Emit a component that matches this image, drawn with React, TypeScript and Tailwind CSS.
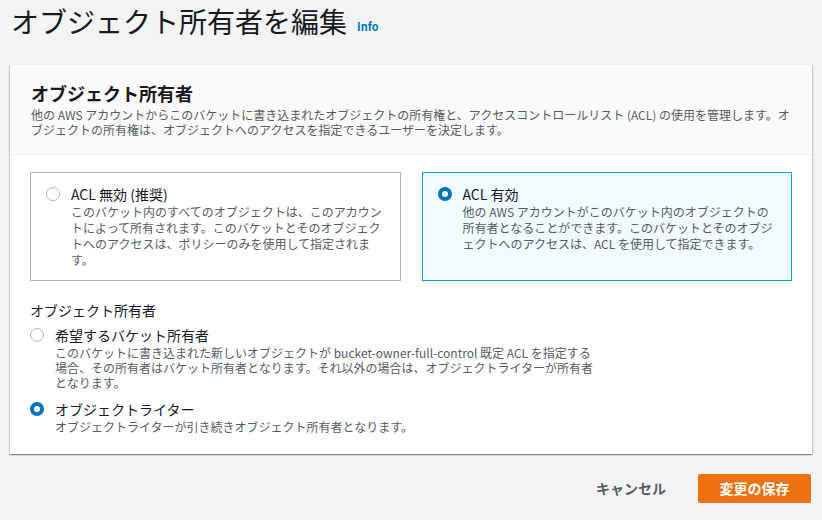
const font = "font-['Noto_Sans_CJK_JP','Noto_Sans',sans-serif]";

type RadioProps = { checked: boolean };

const Radio = ({ checked }: RadioProps) =>
  checked ? (
    <span className="mt-[3px] block h-[14px] w-[14px] shrink-0 rounded-full border-[4px] border-[#0073bb] bg-white" />
  ) : (
    <span className="mt-[3px] block h-[14px] w-[14px] shrink-0 rounded-full border border-[#aab7b8] bg-white" />
  );

const Tile = ({
  title,
  desc,
  checked,
}: {
  title: string;
  desc: string;
  checked: boolean;
}) => (
  <div
    className={
      checked
        ? "flex gap-[11px] border border-[#00a1c9] bg-[#f1faff] pl-[15px] pr-[13px] pt-[11px] pb-[12px]"
        : "flex gap-[11px] border border-[#aab7b8] bg-white pl-[15px] pr-[13px] pt-[11px] pb-[12px]"
    }
  >
    <Radio checked={checked} />
    <div>
      <div className="text-[14px] leading-[20px] text-[#16191f]">{title}</div>
      <p className="text-[12px] leading-[16px] text-[#545b64]">{desc}</p>
    </div>
  </div>
);

const Option = ({
  title,
  desc,
  checked,
}: {
  title: string;
  desc: string;
  checked: boolean;
}) => (
  <div className="flex gap-[11px]">
    <Radio checked={checked} />
    <div>
      <div className="text-[14px] leading-[20px] text-[#16191f]">{title}</div>
      <p className="max-w-[540px] text-[12px] leading-[15px] text-[#545b64]">{desc}</p>
    </div>
  </div>
);

export default function App() {
  return (
    <div className={`${font} min-h-[520px] w-[822px] overflow-hidden bg-[#f2f3f3]`}>
      <div className="flex items-end gap-[10px] px-[11px] pt-[3px]">
        <h1 className="text-[28px] font-normal leading-[36px] text-[#16191f]">
          オブジェクト所有者を編集
        </h1>
        <a className="mb-[5px] text-[11px] font-bold text-[#0073bb]">Info</a>
      </div>

      <div className="mx-[10px] mt-[25px] border-t border-[#eaeded] bg-white shadow-[0_1px_1px_0_rgba(0,28,36,0.3),1px_1px_1px_0_rgba(0,28,36,0.15),-1px_1px_1px_0_rgba(0,28,36,0.15)]">
        <div className="border-b border-[#eaeded] bg-[#fafafa] px-[21px] pt-[15px] pb-[17px]">
          <h2 className="text-[18px] font-bold leading-[26px] text-[#16191f]">
            オブジェクト所有者
          </h2>
          <p className="mt-[1px] text-[12px] leading-[15px] text-[#545b64]">
            他の AWS アカウントからこのバケットに書き込まれたオブジェクトの所有権と、アクセスコントロールリスト (ACL) の使用を管理します。オブジェクトの所有権は、オブジェクトへのアクセスを指定できるユーザーを決定します。
          </p>
        </div>

        <div className="px-[20px] pt-[17px] pb-[20px]">
          <div className="grid grid-cols-2 gap-[21px]">
            <Tile
              checked={false}
              title="ACL 無効 (推奨)"
              desc="このバケット内のすべてのオブジェクトは、このアカウントによって所有されます。このバケットとそのオブジェクトへのアクセスは、ポリシーのみを使用して指定されます。"
            />
            <Tile
              checked={true}
              title="ACL 有効"
              desc="他の AWS アカウントがこのバケット内のオブジェクトの所有者となることができます。このバケットとそのオブジェクトへのアクセスは、ACL を使用して指定できます。"
            />
          </div>

          <div className="mt-[19px] text-[14px] leading-[20px] text-[#16191f]">
            オブジェクト所有者
          </div>
          <div className="mt-[5px] flex flex-col gap-[9px]">
            <Option
              checked={false}
              title="希望するバケット所有者"
              desc="このバケットに書き込まれた新しいオブジェクトが bucket-owner-full-control 既定 ACL を指定する場合、その所有者はバケット所有者となります。それ以外の場合は、オブジェクトライターが所有者となります。"
            />
            <Option
              checked={true}
              title="オブジェクトライター"
              desc="オブジェクトライターが引き続きオブジェクト所有者となります。"
            />
          </div>
        </div>
      </div>

      <div className="mt-[20px] flex items-center justify-end gap-[20px] pr-[11px]">
        <button className="px-[12px] py-[4px] text-[14px] font-bold text-[#545b64]">
          キャンセル
        </button>
        <button className="h-[29px] w-[113px] rounded-[2px] bg-[#ec7211] text-[14px] font-bold text-white">
          変更の保存
        </button>
      </div>
    </div>
  );
}
